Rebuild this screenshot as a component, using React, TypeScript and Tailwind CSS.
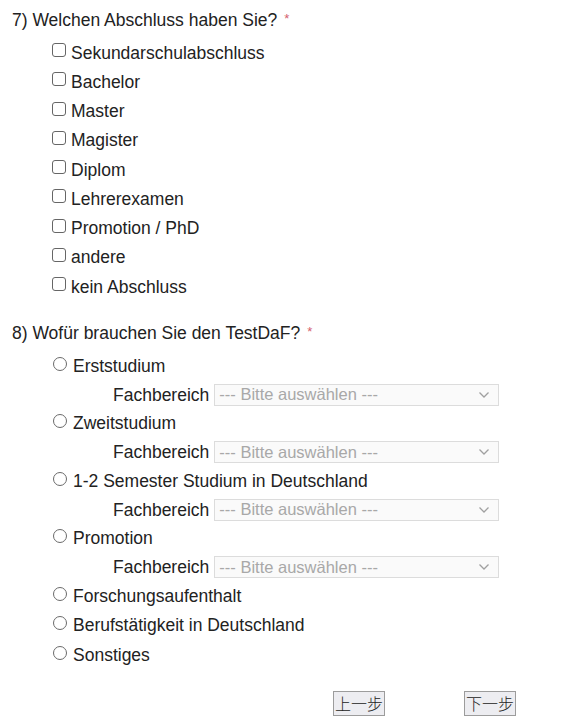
import { useState } from 'react';

const DEGREES = [
  'Sekundarschulabschluss',
  'Bachelor',
  'Master',
  'Magister',
  'Diplom',
  'Lehrerexamen',
  'Promotion / PhD',
  'andere',
  'kein Abschluss',
];

// purposes with a "Fachbereich" select underneath
const PURPOSES = [
  { label: 'Erststudium', field: true },
  { label: 'Zweitstudium', field: true },
  { label: '1-2 Semester Studium in Deutschland', field: true },
  { label: 'Promotion', field: true },
  { label: 'Forschungsaufenthalt', field: false },
  { label: 'Berufstätigkeit in Deutschland', field: false },
  { label: 'Sonstiges', field: false },
];

function Question({ children }: { children: React.ReactNode }) {
  return (
    <div className="h-[29px] flex items-center">
      <span>{children}</span>
      <span className="ml-[7px] mb-[3px] text-[13px] text-[#d4606e]">*</span>
    </div>
  );
}

export default function App() {
  const [checked, setChecked] = useState<string[]>([]);
  const [purpose, setPurpose] = useState<string | null>(null);

  const toggle = (d: string) =>
    setChecked((c) => (c.includes(d) ? c.filter((x) => x !== d) : [...c, d]));

  return (
    <div
      className="min-h-[725px] w-[586px] bg-white text-[#222] text-[17.5px] pt-[6px] px-[12px]"
      style={{ fontFamily: '"Liberation Sans", Arial, sans-serif' }}
    >
      <Question>7) Welchen Abschluss haben Sie?</Question>

      <div className="mt-[3px] pl-[40px]">
        {DEGREES.map((d) => (
          <label key={d} className="h-[29.25px] flex items-center cursor-pointer" onClick={() => toggle(d)}>
            <span className="w-[14px] h-[14px] mb-[5px] mr-[5px] border border-[#666] rounded-[3px] bg-white flex items-center justify-center text-[11px] leading-none">
              {checked.includes(d) ? '✓' : ''}
            </span>
            <span>{d}</span>
          </label>
        ))}
      </div>

      <div className="mt-[17px]">
        <Question>8) Wofür brauchen Sie den TestDaF?</Question>
      </div>

      <div className="mt-[4px] pl-[41px]">
        {PURPOSES.map((p) => (
          <div key={p.label}>
            <label className="h-[29.5px] flex items-center cursor-pointer" onClick={() => setPurpose(p.label)}>
              <span className="w-[14px] h-[14px] mb-[5px] mr-[6px] border border-[#6a6a6a] rounded-full bg-white flex items-center justify-center">
                {purpose === p.label && <span className="w-[8px] h-[8px] rounded-full bg-[#222]" />}
              </span>
              <span>{p.label}</span>
            </label>
            {p.field && (
              <div className="h-[28px] flex items-center pl-[60px]">
                <span>Fachbereich</span>
                <div className="ml-[5px] w-[285px] h-[22px] border border-[#dcdcdc] bg-[#fafafa] flex items-center justify-between pl-[4px] pr-[8px] text-[#a8a8a8] text-[16.5px]">
                  <span>--- Bitte auswählen ---</span>
                  <svg width="12" height="8" viewBox="0 0 12 8" fill="none">
                    <path d="M1.5 1.5 L6 6 L10.5 1.5" stroke="#a0a0a0" strokeWidth="1.3" />
                  </svg>
                </div>
              </div>
            )}
          </div>
        ))}
      </div>

      <div className="mt-[21px] flex pl-[321px] gap-[79px]">
        {['上一步', '下一步'].map((b) => (
          <button
            key={b}
            className="w-[52px] h-[25px] border border-[#9c9c9c] bg-[#ededf1] text-[#222] text-[16px] font-light flex items-center justify-center"
            style={{ fontFamily: '"Noto Sans CJK SC", sans-serif' }}
          >
            {b}
          </button>
        ))}
      </div>
    </div>
  );
}
